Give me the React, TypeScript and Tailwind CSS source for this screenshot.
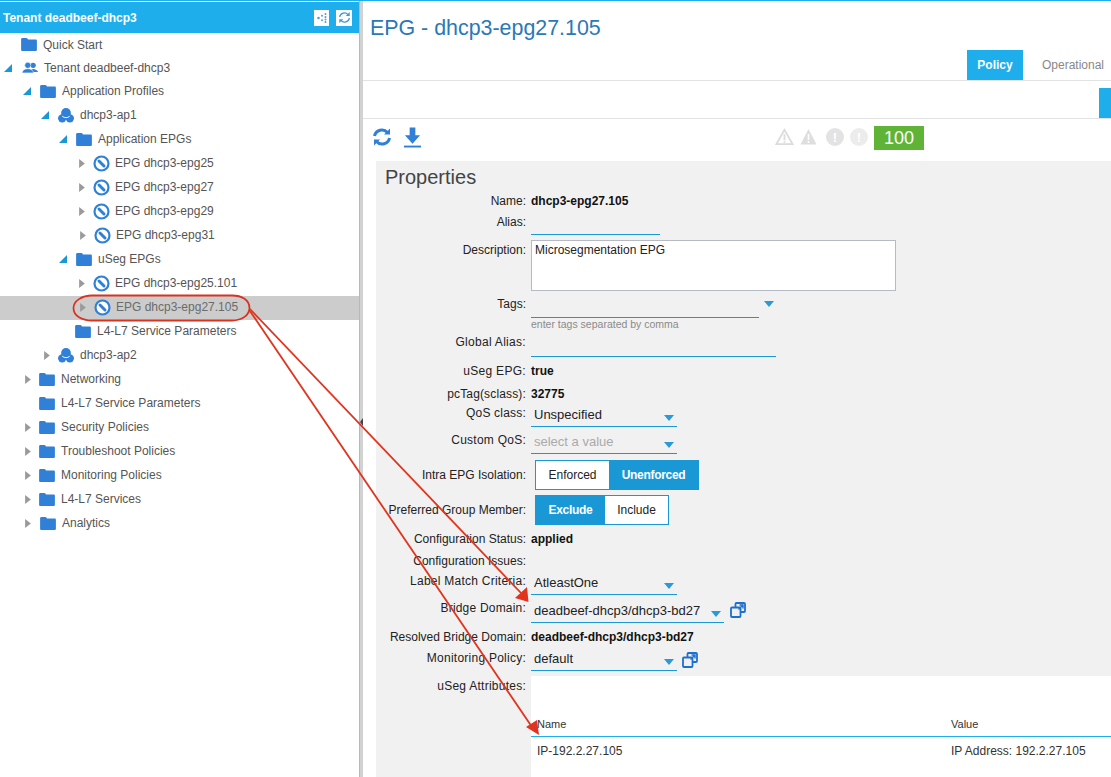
import React from "react";

const Folder = () => (
  <svg width="16" height="13" viewBox="0 0 17 14">
    <path d="M0 1.500C0 .7.6 0 1.400 0h4.200c.6 0 1 .3 1.400.9l.4.6h8.200c.8 0 1.400.6 1.400 1.400v9.700c0 .8-.6 1.400-1.400 1.400H1.400C.6 14 0 13.400 0 12.600z" fill="#2f80d6" />
  </svg>
);
const Users = () => (
  <svg width="16" height="12" viewBox="0 0 18 13">
    <circle cx="12.500" cy="3.500" r="3" fill="#2f80d6" />
    <path d="M10 11c.5-2.500 1-3.500 2.500-3.500S17.500 8.500 18 11z" fill="#2f80d6" />
    <circle cx="6.500" cy="3.500" r="3.400" fill="#2f80d6" stroke="#fff" strokeWidth=".6" />
    <path d="M0 12c.5-3 3-4.700 6.500-4.700s6 1.700 6.500 4.700z" fill="#2f80d6" stroke="#fff" strokeWidth=".6" />
  </svg>
);
const App3 = () => (
  <svg width="16" height="15" viewBox="0 0 17 16">
    <circle cx="8.500" cy="5.200" r="5.200" fill="#2f80d6" />
    <circle cx="4.400" cy="11" r="4.400" fill="#2f80d6" />
    <circle cx="12.600" cy="11" r="4.400" fill="#2f80d6" />
    <path d="M4.500 8.800c2.600 2 5.400 2 8 0" fill="none" stroke="#fff" strokeWidth="1" />
  </svg>
);
const Epg = () => (
  <svg width="17" height="17" viewBox="0 0 17 17">
    <circle cx="8.500" cy="8.500" r="7" fill="#fff" stroke="#2f80d6" strokeWidth="2.200" />
    <path d="M6 6l5 5" stroke="#2f80d6" strokeWidth="3" strokeLinecap="round" />
  </svg>
);
const Down = () => (
  <svg width="8" height="8" viewBox="0 0 9 9"><path d="M9 0v9H0z" fill="#1a97d5" /></svg>
);
const Right = () => (
  <svg width="6" height="9" viewBox="0 0 7 11"><path d="M0 0l7 5.500L0 11z" fill="#9a9a9a" /></svg>
);
const Caret = () => (
  <svg width="10" height="6" viewBox="0 0 10 6"><path d="M0 0h10L5 6z" fill="#2a9ad6" /></svg>
);
const Refresh = ({ size = 20, color = "#2f80d6", sw = 3 }: { size?: number; color?: string; sw?: number }) => (
  <svg width={size} height={size} viewBox="0 0 20 20" fill="none">
    <path d="M2.500 9a7.500 7.500 0 0 1 13-3.500" stroke={color} strokeWidth={sw} />
    <path d="M17.500 11a7.500 7.500 0 0 1-13 3.500" stroke={color} strokeWidth={sw} />
    <path d="M18 1.500v6h-6zM2 18.500v-6h6z" fill={color} />
  </svg>
);
const Popout = () => (
  <svg width="16" height="16" viewBox="0 0 16 16" fill="none" stroke="#1e6fd0" strokeWidth="1.800">
    <rect x="5.500" y="1" width="9.500" height="9" rx="1" />
    <rect x="1" y="5.500" width="9.500" height="9.500" rx="1" fill="#f1f1f1" />
    <path d="M8.500 7.500l4-4M9.500 3h3.500v3.500" strokeWidth="1.400" />
  </svg>
);

type Node = { label: string; arrowX?: number; arrow?: "d" | "r"; iconX: number; icon: "f" | "u" | "a" | "e"; textX: number; selected?: boolean };
const tree: Node[] = [
  { label: "Quick Start", iconX: 21, icon: "f", textX: 43 },
  { label: "Tenant deadbeef-dhcp3", arrow: "d", arrowX: 4, iconX: 22, icon: "u", textX: 44 },
  { label: "Application Profiles", arrow: "d", arrowX: 23, iconX: 40, icon: "f", textX: 62 },
  { label: "dhcp3-ap1", arrow: "d", arrowX: 41, iconX: 58, icon: "a", textX: 80 },
  { label: "Application EPGs", arrow: "d", arrowX: 59, iconX: 76, icon: "f", textX: 98 },
  { label: "EPG dhcp3-epg25", arrow: "r", arrowX: 79, iconX: 93, icon: "e", textX: 115 },
  { label: "EPG dhcp3-epg27", arrow: "r", arrowX: 79, iconX: 93, icon: "e", textX: 115 },
  { label: "EPG dhcp3-epg29", arrow: "r", arrowX: 79, iconX: 93, icon: "e", textX: 115 },
  { label: "EPG dhcp3-epg31", arrow: "r", arrowX: 80, iconX: 94, icon: "e", textX: 116 },
  { label: "uSeg EPGs", arrow: "d", arrowX: 59, iconX: 76, icon: "f", textX: 98 },
  { label: "EPG dhcp3-epg25.101", arrow: "r", arrowX: 79, iconX: 93, icon: "e", textX: 115 },
  { label: "EPG dhcp3-epg27.105", arrow: "r", arrowX: 80, iconX: 94, icon: "e", textX: 116, selected: true },
  { label: "L4-L7 Service Parameters", iconX: 75, icon: "f", textX: 97 },
  { label: "dhcp3-ap2", arrow: "r", arrowX: 44, iconX: 58, icon: "a", textX: 80 },
  { label: "Networking", arrow: "r", arrowX: 25, iconX: 39, icon: "f", textX: 61 },
  { label: "L4-L7 Service Parameters", iconX: 39, icon: "f", textX: 61 },
  { label: "Security Policies", arrow: "r", arrowX: 25, iconX: 39, icon: "f", textX: 61 },
  { label: "Troubleshoot Policies", arrow: "r", arrowX: 25, iconX: 39, icon: "f", textX: 61 },
  { label: "Monitoring Policies", arrow: "r", arrowX: 25, iconX: 39, icon: "f", textX: 61 },
  { label: "L4-L7 Services", arrow: "r", arrowX: 25, iconX: 39, icon: "f", textX: 61 },
  { label: "Analytics", arrow: "r", arrowX: 25, iconX: 40, icon: "f", textX: 62 },
];

const TreeRow = ({ n, short }: { n: Node; short: boolean }) => (
  <div className={`flex items-center ${short ? "h-[23px]" : "h-6"} ${n.selected ? "bg-[#cccccc] text-[#6b6b6b]" : "text-[#555555]"}`} style={{ paddingLeft: n.arrowX ?? n.iconX }}>
    {n.arrow && (
      <span className="flex shrink-0 -translate-y-[1px] items-center justify-start" style={{ width: n.iconX - (n.arrowX ?? 0) }}>
        {n.arrow === "d" ? <Down /> : <Right />}
      </span>
    )}
    <span className="flex shrink-0 -translate-y-[1px] items-center" style={{ width: n.textX - n.iconX }}>
      {n.icon === "f" && <Folder />}
      {n.icon === "u" && <Users />}
      {n.icon === "a" && <App3 />}
      {n.icon === "e" && <Epg />}
    </span>
    <span className="-translate-y-[1px] whitespace-nowrap">{n.label}</span>
  </div>
);

const Label = ({ children, className = "" }: { children: React.ReactNode; className?: string }) => (
  <div className={`w-[154px] shrink-0 whitespace-nowrap pr-[4px] text-right text-[#222222] ${className}`}>{children}</div>
);

const Select = ({ value, w, placeholder }: { value: string; w: string; placeholder?: boolean }) => (
  <div className={`flex h-full items-end justify-between border-b border-[#1a97d5] pb-[5px] pl-[3px] pr-[3px] ${w}`}>
    <span className={`whitespace-nowrap text-[13px] ${placeholder ? "text-[#aaaaaa]" : "text-[#222222]"}`}>{value}</span>
    <span className="mb-[0px]"><Caret /></span>
  </div>
);

export default function App() {
  return (
    <div className="relative flex h-[777px] w-[1111px] overflow-hidden border-t border-[#1daeeb] bg-white pt-[1px] font-['Liberation_Sans',Arial,sans-serif] text-[12px] leading-none">
      <aside className="flex h-full w-[359px] shrink-0 flex-col">
        <div className="flex h-[31px] shrink-0 items-center justify-between bg-[#1daeeb] pl-[3px] pr-[7px]">
          <span className="text-[12px] font-bold text-white">Tenant deadbeef-dhcp3</span>
          <div className="flex gap-[7px]">
            <span className="flex h-[16px] w-[15px] items-center justify-center bg-white">
              <svg width="10" height="10" viewBox="0 0 10 10" fill="#5b9bd5">
                <circle cx="1.500" cy="5" r="1.300" /><circle cx="5" cy="2.800" r="1" /><circle cx="5" cy="7.200" r="1" /><circle cx="8.500" cy="1" r="1" /><circle cx="8.500" cy="4" r="1" /><circle cx="8.500" cy="6.500" r="1" /><circle cx="8.500" cy="9" r="1" />
              </svg>
            </span>
            <span className="flex h-[16px] w-[16px] items-center justify-center bg-white">
              <Refresh size={13} color="#3a9ad9" sw={2} />
            </span>
          </div>
        </div>
        <div className="pt-[1px]">
          {tree.map((n, i) => <TreeRow key={i} n={n} short={i < 2} />)}
        </div>
      </aside>

      <div className="relative -mt-[1px] w-[4px] shrink-0 border-l border-[#b8b8b8] bg-[#d2d2d2]">
        <span className="absolute left-[0px] top-[417px] h-0 w-0 border-y-[4px] border-r-[3px] border-y-transparent border-r-[#444444]" />
      </div>

      <main className="flex h-full min-w-0 flex-1 flex-col">
        <div className="h-[48px] shrink-0 pl-[7px] pt-[14px] text-[21.4px] leading-[24px] text-[#2a78b8]">EPG - dhcp3-epg27.105</div>
        <div className="flex h-[30px] shrink-0 items-stretch justify-end">
          <div className="flex w-[56px] items-center justify-center bg-[#1daeeb] text-[12px] font-bold text-white">Policy</div>
          <div className="flex w-[88px] items-center pl-[19px] text-[#888888]">Operational</div>
        </div>
        <div className="flex h-[39px] shrink-0 justify-end border-y border-[#e2e2e2] pt-[7px]">
          <div className="w-[12px] bg-[#1daeeb]" />
        </div>
        <div className="flex h-[42px] shrink-0 items-start pl-[9px] pt-[8px]">
          <Refresh size={20} />
          <svg width="19" height="22" viewBox="0 0 20 22" className="ml-[11px]">
            <path d="M7 0h6v8h5l-8 9-8-9h5z" fill="#2f80d6" /><rect x="1" y="19" width="18" height="2" fill="#2f80d6" />
          </svg>
          <div className="ml-[353px] mt-[1px] flex items-center">
            <svg width="19" height="18" viewBox="0 0 20 18" fill="none"><path d="M10 1.500L18.500 16.500H1.500z" stroke="#dcdcdc" strokeWidth="2" /><path d="M10 6v6.500M10 13.500v1.500" stroke="#dcdcdc" strokeWidth="2" /></svg>
            <svg width="19" height="18" viewBox="0 0 18 18" className="ml-[5px]"><path d="M9 1l8 15.500H1z" fill="#dedede" /><path d="M9 6v6M9 13v2" stroke="#fff" strokeWidth="1.600" /></svg>
            <span className="ml-[8px] flex h-[18px] w-[18px] items-center justify-center rounded-full bg-[#e3e3e3] text-[13px] font-bold text-white">!</span>
            <span className="ml-[6px] flex h-[18px] w-[18px] items-center justify-center rounded-full bg-[#ececec] text-[13px] font-bold text-white">!</span>
          </div>
          <div className="ml-[6px] mt-[-1px] flex h-[24px] w-[50px] items-center justify-center bg-[#5fb336] text-[18px] font-medium text-white">100</div>
        </div>

        <section className="ml-[13px] min-h-0 flex-1 overflow-hidden bg-[#f1f1f1]">
          <div className="h-[29px] pl-[9px] pt-[6px] text-[20px] leading-[20px] text-[#444444]">Properties</div>
          <div className="flex h-[21px] items-center"><Label>Name:</Label><span className="pl-[1px] font-bold text-[#111111]">dhcp3-epg27.105</span></div>
          <div className="flex h-[24px] items-start pt-[5px]"><Label>Alias:</Label><div className="ml-[1px] h-[19px] w-[129px] border-b border-[#1a97d5]" /></div>
          <div className="mt-[5px] flex h-[51px]">
            <Label className="pt-[4px]">Description:</Label>
            <div className="ml-[1px] w-[365px] border border-[#b5bac6] bg-white pl-[3px] pt-[2px] leading-[14px] text-[#222222]">Microsegmentation EPG</div>
          </div>
          <div className="mt-[4px] flex h-[23px] items-start pt-[3px]">
            <Label>Tags:</Label>
            <div className="ml-[1px] h-[20px] w-[228px] border-b border-[#1a97d5]" />
            <span className="ml-[5px] mt-[3px]"><Caret /></span>
          </div>
          <div className="h-[14px] pl-[155px] pt-[1px] text-[10.5px] text-[#8a8a8a]">enter tags separated by comma</div>
          <div className="flex h-[25px] items-start pt-[4px]"><Label className="tracking-[0.3px]">Global Alias:</Label><div className="ml-[1px] h-[21px] w-[245px] border-b border-[#1a97d5]" /></div>
          <div className="mt-[3px] flex h-[21px] items-center"><Label className="tracking-[0.3px]">uSeg EPG:</Label><span className="pl-[1px] font-bold text-[#111111]">true</span></div>
          <div className="mt-[2px] flex h-[21px] items-center"><Label className="tracking-[0.15px]">pcTag(sclass):</Label><span className="pl-[1px] font-bold text-[#111111]">32775</span></div>
          <div className="flex h-[23px] items-start pt-[3px]"><Label className="tracking-[0.2px]">QoS class:</Label><div className="ml-[1px] h-[20px]"><Select value="Unspecified" w="w-[146px]" /></div></div>
          <div className="mt-[4px] flex h-[23px] items-start pt-[3px]"><Label className="tracking-[0.25px]">Custom QoS:</Label><div className="ml-[1px] h-[20px]"><Select value="select a value" w="w-[146px]" placeholder /></div></div>
          <div className="mt-[6px] flex h-[30px] items-center">
            <Label>Intra EPG Isolation:</Label>
            <div className="ml-[5px] flex h-[30px] border border-[#1a97d5]">
              <span className="flex w-[73px] items-center justify-center bg-white text-[#222222]">Enforced</span>
              <span className="flex w-[89px] items-center justify-center bg-[#1a97d5] font-bold tracking-[-0.3px] text-white">Unenforced</span>
            </div>
          </div>
          <div className="mt-[5px] flex h-[30px] items-center">
            <Label>Preferred Group Member:</Label>
            <div className="ml-[5px] flex h-[30px] border border-[#1a97d5]">
              <span className="flex w-[69px] items-center justify-center bg-[#1a97d5] font-bold tracking-[-0.3px] text-white">Exclude</span>
              <span className="flex w-[63px] items-center justify-center bg-white text-[#222222]">Include</span>
            </div>
          </div>
          <div className="mt-[3px] flex h-[21px] items-center"><Label>Configuration Status:</Label><span className="pl-[1px] font-bold text-[#111111]">applied</span></div>
          <div className="mt-[1px] flex h-[21px] items-center"><Label>Configuration Issues:</Label></div>
          <div className="flex h-[25px] items-start pt-[4px]"><Label className="tracking-[0.25px]">Label Match Criteria:</Label><div className="ml-[1px] h-[20px]"><Select value="AtleastOne" w="w-[146px]" /></div></div>
          <div className="mt-[2px] flex h-[24px] items-start pt-[4px]">
            <Label className="tracking-[0.2px]">Bridge Domain:</Label>
            <div className="ml-[1px] h-[21px]"><Select value="deadbeef-dhcp3/dhcp3-bd27" w="w-[193px]" /></div>
            <span className="ml-[6px]"><Popout /></span>
          </div>
          <div className="mt-[4px] flex h-[21px] items-center"><Label>Resolved Bridge Domain:</Label><span className="pl-[1px] font-bold text-[#111111]">deadbeef-dhcp3/dhcp3-bd27</span></div>
          <div className="flex h-[24px] items-start pt-[5px]">
            <Label className="tracking-[0.25px]">Monitoring Policy:</Label>
            <div className="ml-[1px] h-[19px]"><Select value="default" w="w-[146px]" /></div>
            <span className="ml-[5px]"><Popout /></span>
          </div>
          <div className="mt-[5px] flex h-[101px]">
            <Label className="pt-[4px] tracking-[0.25px]">uSeg Attributes:</Label>
            <div className="ml-[1px] flex-1 bg-white text-[11px] text-[#333333]">
              <div className="flex h-[61px] items-end border-b border-[#1daeeb] pb-[6px] pl-[6px]">
                <span className="w-[414px]">Name</span><span>Value</span>
              </div>
              <div className="flex items-center pl-[6px] pt-[8px] text-[12px]">
                <span className="w-[414px]">IP-192.2.27.105</span><span>IP Address: 192.2.27.105</span>
              </div>
            </div>
          </div>
        </section>
      </main>

      <svg className="pointer-events-none absolute left-0 top-[-1px]" width="1111" height="777" viewBox="0 0 1111 777" fill="none">
        <path d="M92 295.500C82 295.500 73.500 301 73.500 308C73.500 316 82 320.500 92 320.500H232C242 320.500 249.500 315 249.500 308C249.500 300 242 295.500 232 295.500Z" stroke="#d8331f" strokeWidth="1.800" />
        <path d="M250 309L521 593" stroke="#e0341f" strokeWidth="1.800" />
        <path d="M528.500 602L515 598L527 587Z" fill="#e0341f" />
        <path d="M250 311L532 727" stroke="#e0341f" strokeWidth="1.800" />
        <path d="M539 735L526 727L537 720Z" fill="#e0341f" />
      </svg>
    </div>
  );
}
